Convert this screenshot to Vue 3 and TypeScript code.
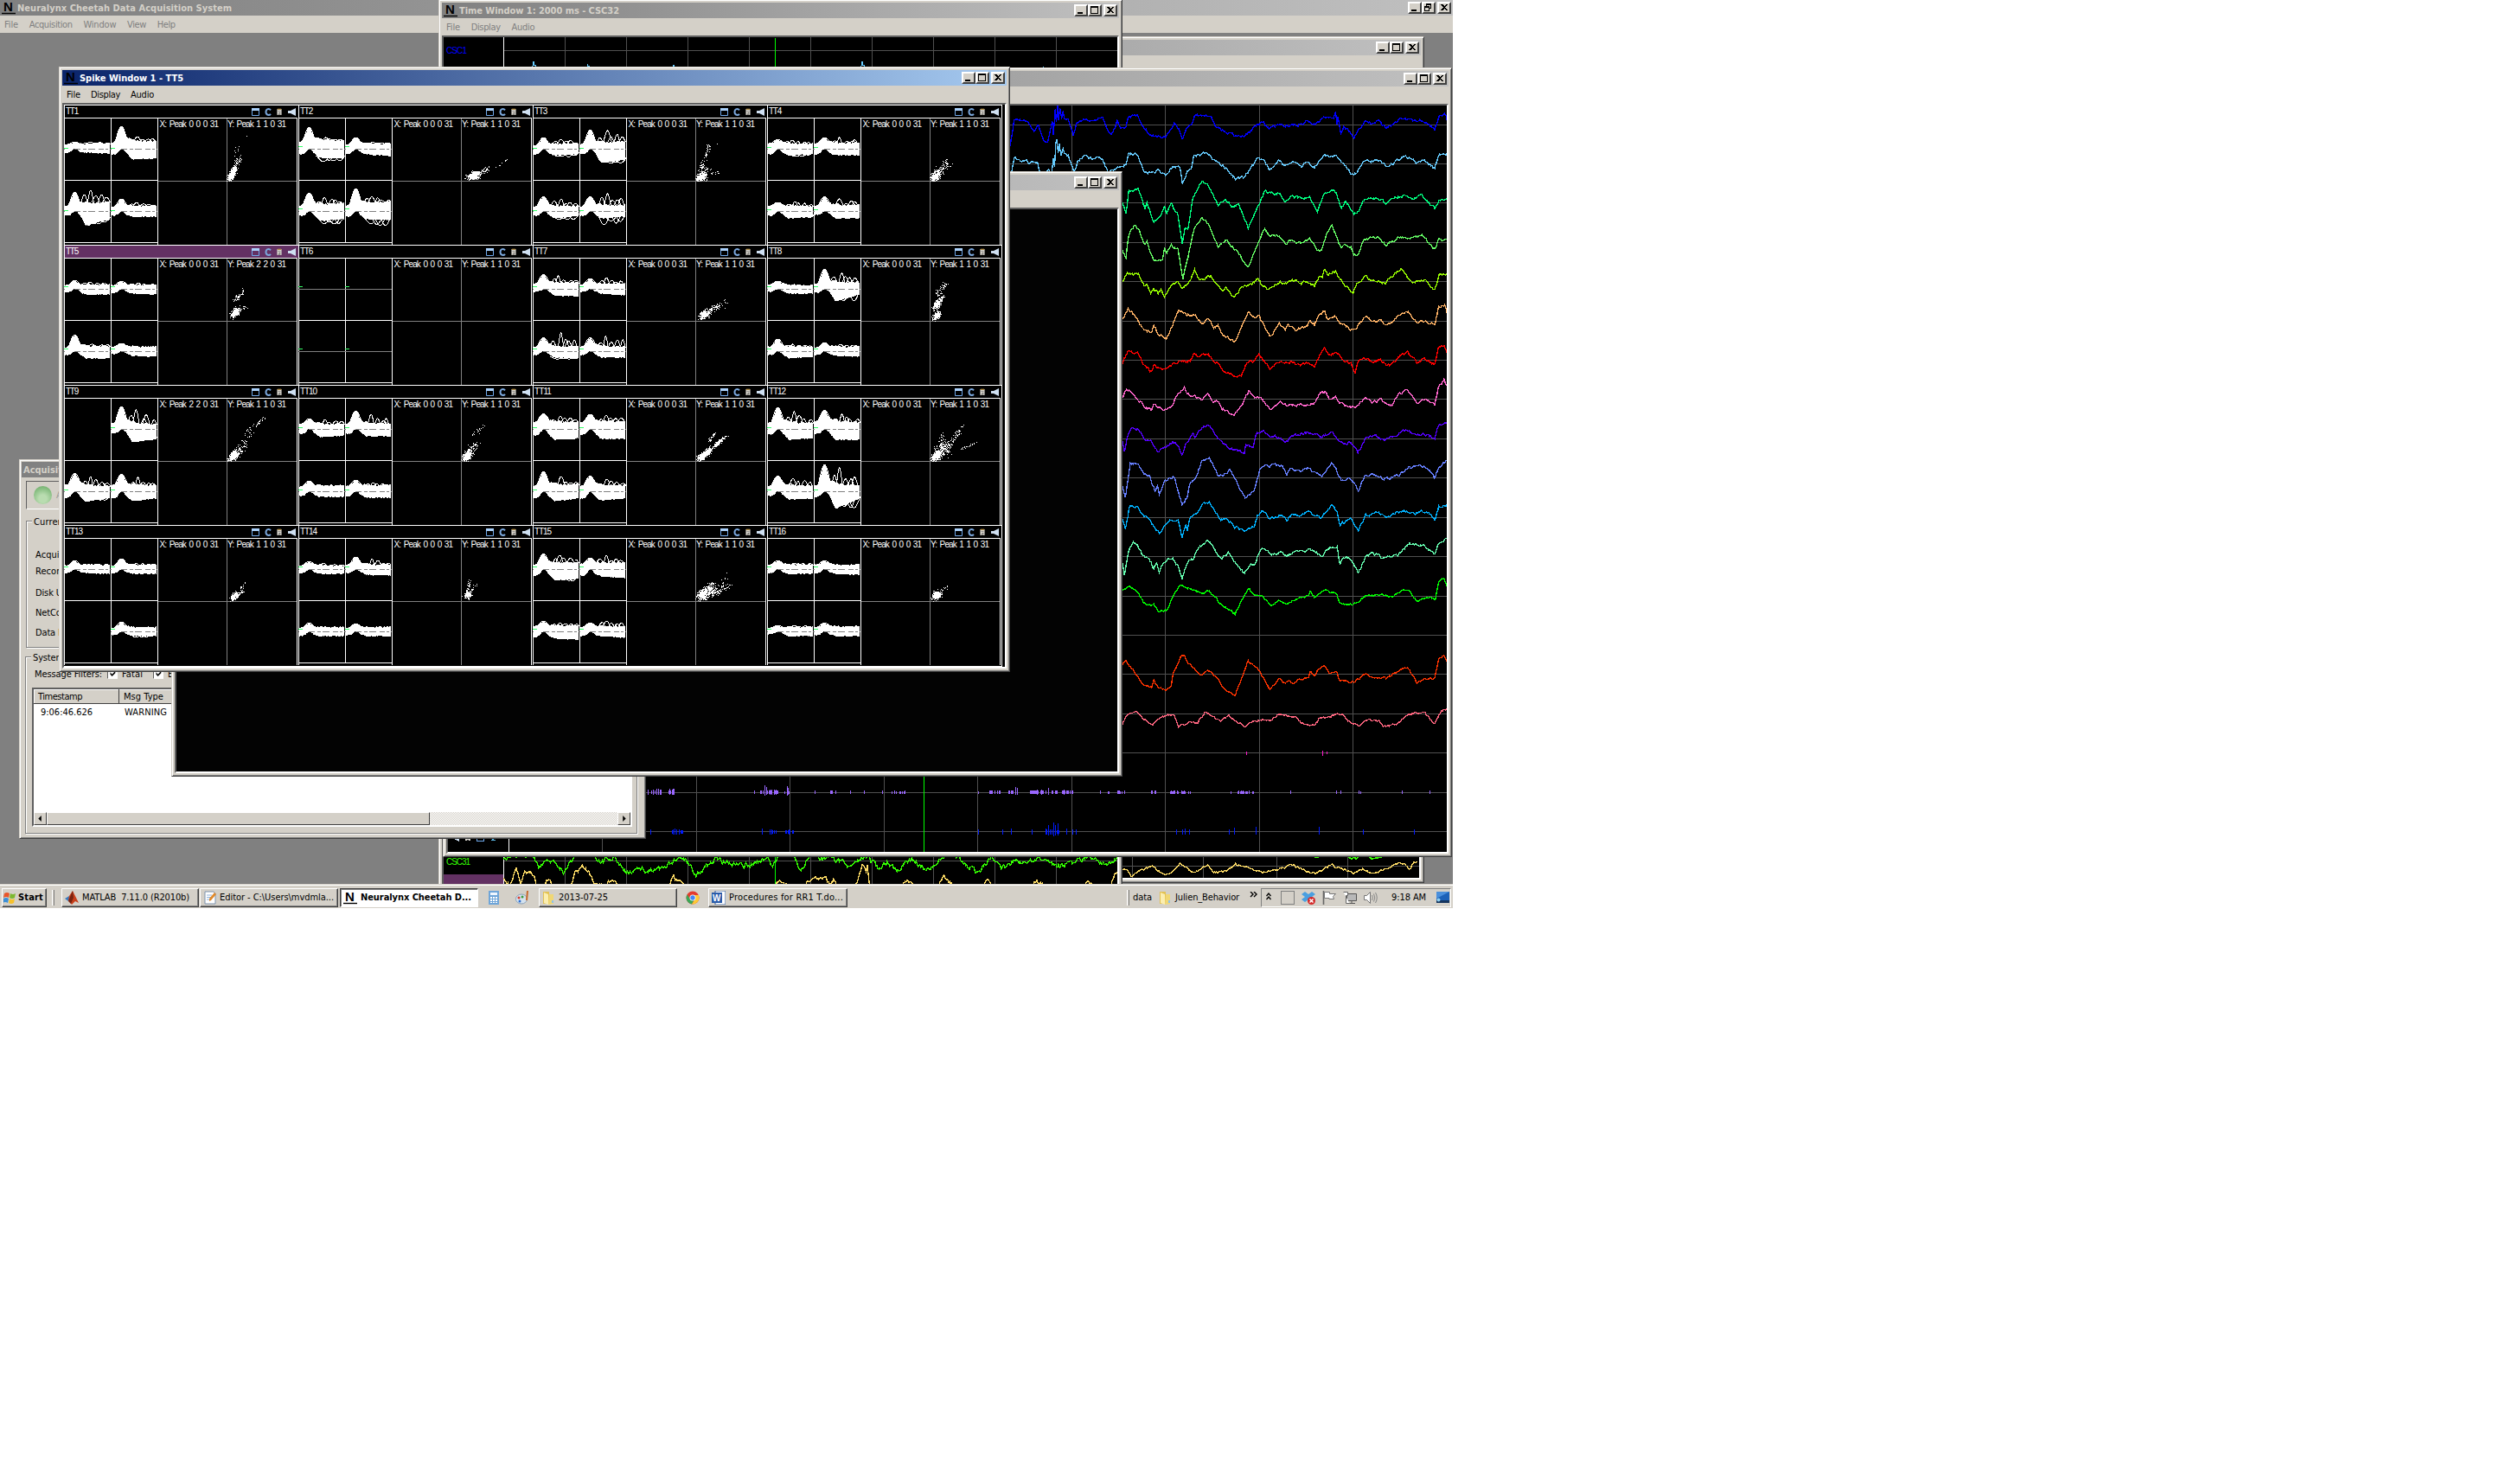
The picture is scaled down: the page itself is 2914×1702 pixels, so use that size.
<script setup lang="ts">
type Pt = [number, number]

const vFit = {
  mounted(el: HTMLElement, b: { value: number }) {
    const n = (el.textContent || '').trim().length
    el.style.letterSpacing = (b.value - el.getBoundingClientRect().width) / n + 'px'
  },
}

function rng(seed: number) {
  let s = seed * 7919 + 13
  return () => {
    s = (s * 1103515245 + 12345) % 2147483648
    return s / 2147483648
  }
}

// ---------- spike window ----------
// top left, peak, top right, bottom left, dip, bottom right, extra up, extra down
type Wave = number[] | null
interface Cell { name: string; x: string; y: string; g: number; w: Wave[]; c: number[][] }
const X0 = 'X: Peak 0 0 0 31'
const Y1 = 'Y: Peak 1 1 0 31'
const cells: Cell[] = [
  { name: 'TT1', x: X0, y: Y1, g: 50, w: [[5, 7, 6, 4, 4, 5, 8, 5], [7, 25, 9, 6, 12, 10, 14, 12], [5, 21, 11, 5, 16, 9, 24, 17], [5, 13, 6, 5, 6, 6, 10, 6]], c: [[2, 0, 10, 16, 2.5, 260], [8, 14, 15, 27, 3, 60], [8, 28, 13, 40, 2, 8], [23, 52, 23, 52, 0, 1]] },
  { name: 'TT2', x: X0, y: Y1, g: 48, w: [[8, 24, 10, 6, 10, 10, 13, 16], [5, 12, 6, 5, 6, 8, 8, 8], [6, 20, 9, 5, 11, 9, 16, 15], [6, 25, 11, 6, 9, 10, 17, 18]], c: [[7, 4, 22, 9, 3, 260], [20, 8, 34, 15, 2.5, 40], [36, 14, 54, 25, 1, 8]] },
  { name: 'TT3', x: X0, y: Y1, g: 50, w: [[4, 12, 6, 6, 7, 6, 11, 11], [5, 21, 9, 6, 16, 12, 21, 18], [5, 16, 6, 5, 8, 5, 14, 10], [5, 16, 7, 5, 8, 6, 20, 19]], c: [[2, 1, 12, 8, 3, 220], [4, 8, 14, 14, 3, 40], [6, 14, 12, 30, 2, 30], [11, 28, 16, 42, 2, 30], [18, 8, 28, 11, 2, 12], [25, 43, 25, 43, 0, 1]] },
  { name: 'TT4', x: X0, y: Y1, g: 49, w: [[6, 10, 6, 6, 7, 6, 10, 9], [6, 12, 7, 6, 7, 7, 13, 7], [6, 9, 6, 5, 8, 6, 11, 8], [6, 16, 7, 4, 8, 8, 14, 9]], c: [[3, 2, 10, 10, 3, 220], [8, 8, 20, 20, 4, 70], [18, 20, 20, 27, 1, 8], [26, 20, 26, 20, 0, 1]] },
  { name: 'TT5', x: X0, y: 'Y: Peak 2 2 0 31', g: 48, w: [[4, 9, 5, 4, 6, 6, 8, 7], [4, 8, 4, 4, 5, 6, 7, 6], [4, 18, 6, 4, 8, 8, 8, 9], [5, 8, 5, 3, 5, 6, 6, 6]], c: [[6, 6, 14, 14, 3, 150], [14, 12, 22, 17, 2, 14], [9, 25, 16, 30, 3, 30], [14, 30, 20, 36, 2, 10]] },
  { name: 'TT6', x: X0, y: Y1, g: 48, w: [[], [], [], []], c: [] },
  { name: 'TT7', x: X0, y: Y1, g: 48, w: [[6, 16, 7, 3, 7, 8, 15, 8], [5, 11, 6, 3, 5, 7, 13, 7], [5, 15, 6, 4, 7, 8, 21, 10], [5, 15, 5, 4, 7, 7, 17, 7]], c: [[6, 4, 14, 11, 3, 180], [12, 9, 26, 18, 3, 70], [26, 14, 36, 25, 3, 14]] },
  { name: 'TT8', x: X0, y: Y1, g: 48, w: [[5, 8, 4, 3, 5, 5, 5, 5], [5, 22, 8, 4, 14, 6, 18, 14], [5, 13, 5, 4, 8, 6, 8, 6], [4, 9, 5, 4, 5, 6, 8, 6]], c: [[5, 3, 11, 10, 2.500, 150], [5, 14, 11, 24, 2.500, 150], [10, 22, 15, 28, 2, 40], [8, 30, 18, 44, 3, 50]] },
  { name: 'TT9', x: 'X: Peak 2 2 0 31', y: Y1, g: 49, w: [null, [6, 25, 6, 5, 15, 11, 22, 13], [7, 20, 6, 7, 12, 7, 17, 11], [7, 19, 7, 8, 11, 8, 16, 9]], c: [[3, 1, 14, 12, 3, 200], [10, 10, 22, 22, 4, 50], [18, 22, 30, 36, 3, 16], [32, 40, 44, 50, 2, 22], [22, 34, 28, 38, 2, 8]] },
  { name: 'TT10', x: X0, y: Y1, g: 49, w: [[6, 11, 6, 5, 9, 7, 11, 7], [6, 20, 6, 5, 8, 8, 17, 9], [5, 11, 7, 5, 6, 6, 8, 6], [6, 12, 7, 5, 7, 7, 10, 8]], c: [[4, 1, 10, 12, 3, 200], [8, 10, 18, 20, 4, 50], [14, 32, 25, 40, 3, 18]] },
  { name: 'TT11', x: X0, y: Y1, g: 49, w: [[8, 17, 8, 7, 12, 10, 15, 12], [8, 16, 9, 6, 11, 11, 16, 11], [6, 22, 8, 7, 11, 8, 17, 9], [6, 17, 7, 8, 10, 8, 14, 9]], c: [[2, 1, 18, 14, 2.5, 220], [8, 8, 18, 16, 3, 50], [18, 14, 34, 28, 1.5, 110], [16, 24, 22, 32, 1.5, 35], [34, 28, 40, 32, 1, 4]] },
  { name: 'TT12', x: X0, y: Y1, g: 49, w: [[7, 24, 7, 6, 12, 10, 20, 11], [9, 21, 8, 5, 12, 12, 17, 12], [6, 17, 6, 5, 9, 8, 15, 9], [6, 30, 7, 6, 20, 8, 27, 20]], c: [[3, 1, 12, 10, 3, 200], [8, 8, 22, 20, 5, 120], [20, 14, 34, 36, 2, 50], [34, 36, 40, 43, 1, 6], [10, 24, 16, 32, 3, 15], [36, 14, 54, 22, 1, 22]] },
  { name: 'TT13', x: X0, y: Y1, g: 48, w: [[4, 9, 5, 4, 4, 5, 5, 5], [4, 11, 5, 4, 5, 5, 7, 5], null, [4, 10, 5, 4, 5, 5, 6, 7]], c: [[6, 3, 12, 9, 2.5, 120], [12, 8, 20, 14, 2.5, 25], [16, 14, 21, 22, 1.5, 8]] },
  { name: 'TT14', x: X0, y: Y1, g: 48, w: [[4, 8, 4, 4, 5, 5, 7, 5], [5, 13, 5, 4, 6, 7, 12, 8], [4, 9, 5, 5, 5, 5, 6, 5], [4, 8, 5, 4, 5, 5, 6, 5]], c: [[5, 4, 11, 11, 2.5, 110], [7, 10, 10, 26, 2, 30], [12, 14, 18, 20, 2, 8]] },
  { name: 'TT15', x: X0, y: Y1, g: 48, w: [[5, 17, 8, 7, 12, 11, 16, 14], [6, 12, 8, 7, 8, 10, 16, 10], [6, 11, 7, 6, 8, 9, 10, 9], [5, 9, 6, 5, 5, 7, 12, 7]], c: [[4, 4, 12, 11, 4, 180], [8, 8, 24, 16, 5, 130], [24, 12, 38, 20, 4, 50], [16, 20, 36, 26, 3, 15], [36, 33, 36, 33, 0, 1]] },
  { name: 'TT16', x: X0, y: Y1, g: 48, w: [[5, 9, 5, 4, 5, 5, 7, 5], [5, 9, 5, 4, 5, 6, 6, 6], [4, 6, 5, 3, 5, 5, 7, 5], [5, 9, 6, 4, 5, 5, 7, 5]], c: [[4, 4, 12, 10, 3, 180], [12, 11, 20, 18, 1.5, 12]] },
]

function body(w: Wave, seed: number): string {
  if (!w || !w.length) return ''
  const r = rng(seed)
  const [t, p, tl, l, d, e] = w
  const up: string[] = []
  const lo: string[] = []
  for (let x = 1; x <= 53; x++) {
    const f = x / 53
    const base = t + (tl - t) * f
    const sd = x < 12 ? 5 : 4
    const slow = (p - base) * 0.2 * Math.exp(-Math.pow((x - 20) / 9, 2))
    let a = base + (p - base) * Math.exp(-Math.pow((x - 12.5) / sd, 2)) * 0.94 + slow
    a += (r() - 0.4) * (x > 18 ? 2.6 : 1)
    let b: number
    if (x < 18) b = l - (l + 0.5) * Math.exp(-Math.pow((x - 13) / 4.5, 2))
    else if (x < 25) b = l * 0.7 + (d - l * 0.7) * ((x - 18) / 7)
    else b = d + (e - d) * ((x - 25) / 28)
    b += 0.6 + (r() - 0.5) * 1.4
    up.push(`${x} ${(-a).toFixed(1)}`)
    lo.unshift(`${x} ${b.toFixed(1)}`)
  }
  return 'M' + up.join('L') + 'L' + lo.join('L') + 'Z'
}

function humps(w: Wave, seed: number): string {
  if (!w || !w.length) return ''
  const r = rng(seed + 50)
  let s = ''
  const hump = (c: number, wd: number, from: number, to: number, sg: number) => {
    for (let i = -8; i <= 8; i++) {
      const x = Math.min(53, c + (i / 8) * wd)
      const y = from + (to - from) * Math.pow(Math.cos((i / 8) * Math.PI / 2), 1.3)
      s += (i === -8 ? 'M' : 'L') + x.toFixed(1) + ' ' + (sg * y).toFixed(1)
    }
  }
  const dx = w[6] - w[2]
  if (dx > 1) for (let k = 0; k < 5; k++) hump(23 + k * 6 + r() * 4, 3 + r() * 2, w[2] - 1, w[2] + dx * (k === 1 ? 1 : 0.2 + r() * 0.5), -1)
  const db = w[7] - w[5]
  if (db > 1) for (let k = 0; k < 4; k++) hump(28 + k * 6 + r() * 3, 5 + r() * 4, w[5] - 2, w[5] + db * (0.4 + r() * 0.6), 1)
  hump(12.5, 8, w[0], w[1] + 0.8, -1)
  return s
}

function dots(c: number[][], seed: number): string {
  const r = rng(seed + 900)
  let s = ''
  for (const [x0, y0, x1, y1, w, n] of c) {
    const dense = n > 100
    for (let i = 0; i < n * (dense ? 1.5 : 1); i++) {
      const f = dense ? (r() + r()) / 2 : r()
      const g = () => (r() + r() + r() - 1.5) * w * (dense ? 1.35 : 1.2)
      const x = Math.round(x0 + (x1 - x0) * f + g())
      const y = Math.round(y0 + (y1 - y0) * f + g())
      if (y < 0 || x < 0) continue
      s += `M${188 + x} ${73 - y}h1v1h-1z`
    }
  }
  return s
}

const plots = cells.map((c, i) => ({
  ...c,
  panels: c.w.map((w, k) => ({
    on: w !== null,
    flat: !!w && !w.length,
    dx: (k % 2) * 54,
    dy: k < 2 ? 36 : 108,
    d: body(w, i * 4 + k + 1),
    h: humps(w, i * 4 + k + 1),
  })),
  dots: dots(c.c, i + 1),
}))

// ---------- continuous traces ----------
interface Trace { color: string; pts: string }
function parse(s: string): Pt[] {
  return s.split(' ').map(q => q.split(',').map(Number) as Pt)
}
function wire(s: string, seed: number, ox: number, sx: number, oy: number, sy: number, jit: number): string {
  const r = rng(seed + 300)
  const p = parse(s).map(([x, y]) => [ox + x / sx, oy + y / sy] as Pt)
  let out = ''
  let n = 0
  for (let i = 0; i < p.length - 1; i++) {
    const [ax, ay] = p[i]
    const [bx, by] = p[i + 1]
    const m = Math.max(1, Math.round(bx - ax))
    for (let k = 0; k < m; k++) {
      n = n * 0.55 + (r() - 0.5) * jit
      const f = k / m
      const y = ay + (by - ay) * f + n
      out += `${(ax + (bx - ax) * f).toFixed(1)},${y.toFixed(1)} `
    }
  }
  const z = p[p.length - 1]
  return out + `${z[0].toFixed(1)},${z[1].toFixed(1)}`
}

const upper: Trace[] = [
  { color: '#0000ff', pts: '0,440 24,498 38,405 60,412 85,418 105,450 120,425 140,480 152,485 168,415 172,465 178,375 182,420 186,362 190,410 194,370 200,405 205,385 210,412 222,400 240,465 250,425 275,410 340,405 355,445 370,465 390,415 400,440 420,430 430,395 460,398 480,435 510,465 555,468 585,425 600,440 613,480 625,440 645,425 655,395 712,395 725,430 750,445 790,465 825,465 850,445 885,415 912,443 945,422 965,430 1000,428 1048,415 1068,430 1088,405 1130,400 1137,380 1142,420 1145,395 1155,455 1165,435 1185,450 1200,470 1240,412 1260,425 1285,415 1308,437 1370,402 1410,418 1425,412 1450,420 1476,443 1492,398 1510,392 1518,410' },
  { color: '#66ccff', pts: '24,600 30,587 38,535 60,550 95,555 118,560 130,600 155,580 165,600 172,545 176,570 180,490 184,475 188,520 192,490 198,535 205,505 210,525 222,530 243,590 255,550 275,535 340,545 360,590 380,582 400,572 420,565 428,525 460,528 480,585 510,595 530,580 555,600 580,570 605,575 613,625 630,590 645,570 652,530 700,525 720,548 755,570 795,612 825,605 870,545 890,545 912,577 945,548 965,570 1000,552 1020,568 1040,552 1065,572 1100,530 1140,535 1165,565 1200,603 1235,550 1290,548 1310,570 1365,538 1395,540 1412,557 1440,545 1476,577 1490,530 1518,525' },
  { color: '#00ff80', pts: '400,680 408,690 420,735 430,655 462,645 485,715 492,690 515,760 540,735 552,705 560,730 575,695 598,735 613,830 622,775 632,780 650,670 680,620 702,635 735,700 760,680 790,710 805,700 838,780 880,685 895,650 915,663 945,658 963,690 985,670 1020,678 1048,670 1075,718 1100,665 1123,645 1142,665 1157,715 1170,690 1200,735 1215,725 1230,685 1280,675 1308,695 1360,670 1410,678 1430,665 1476,715 1490,685 1518,678' },
  { color: '#66ff66', pts: '400,840 408,860 420,882 430,800 450,773 465,785 485,835 492,828 515,893 545,885 552,848 560,870 575,838 598,855 615,955 632,880 655,775 680,748 702,765 735,845 762,822 805,865 838,917 880,815 895,783 915,810 945,803 965,835 985,820 1020,832 1048,815 1075,858 1088,855 1110,790 1125,770 1157,850 1170,835 1190,845 1200,870 1215,868 1235,818 1280,813 1308,838 1350,812 1410,812 1430,800 1476,855 1490,820 1518,818' },
  { color: '#99ff00', pts: '400,965 408,962 425,935 462,940 485,980 492,970 505,1005 515,990 530,1005 540,990 552,1015 580,970 598,965 613,987 640,965 655,925 672,955 710,945 735,980 750,995 762,985 790,1017 815,985 850,972 872,955 885,975 912,990 945,962 965,970 1000,957 1020,968 1040,960 1065,975 1080,950 1092,945 1100,920 1110,940 1137,928 1150,955 1197,1002 1210,965 1220,970 1240,943 1255,960 1285,962 1308,970 1335,940 1360,922 1400,965 1440,958 1476,990 1492,940 1518,935' },
  { color: '#ffb366', pts: '400,1100 408,1090 427,1055 450,1080 480,1125 508,1135 515,1108 530,1140 558,1157 580,1110 600,1062 640,1080 655,1075 680,1108 700,1090 720,1120 735,1115 750,1143 792,1168 815,1115 838,1068 860,1088 875,1085 912,1150 945,1112 965,1130 975,1110 1000,1130 1040,1112 1050,1098 1065,1110 1080,1080 1100,1060 1110,1090 1137,1083 1150,1105 1200,1130 1240,1080 1265,1105 1290,1090 1308,1108 1335,1100 1365,1068 1385,1070 1415,1105 1440,1100 1476,1107 1490,1050 1510,1045 1518,1070' },
  { color: '#ff0000', pts: '400,1240 408,1240 427,1200 462,1210 485,1255 508,1272 515,1250 555,1268 580,1245 620,1235 640,1235 652,1210 672,1220 702,1212 720,1240 735,1240 750,1262 795,1292 815,1282 835,1235 860,1235 875,1212 912,1260 945,1235 965,1245 985,1238 1020,1250 1040,1240 1065,1255 1080,1220 1100,1185 1115,1215 1140,1207 1165,1232 1190,1245 1204,1272 1215,1235 1240,1225 1265,1240 1290,1228 1310,1250 1330,1248 1365,1207 1385,1207 1415,1240 1440,1227 1476,1247 1488,1190 1508,1180 1518,1205' },
  { color: '#ff66cc', pts: '400,1365 408,1360 422,1328 445,1350 485,1388 508,1405 515,1385 552,1403 575,1390 590,1360 620,1322 630,1348 680,1365 700,1350 720,1375 735,1370 750,1397 790,1425 815,1385 840,1338 860,1360 878,1355 912,1402 945,1375 965,1385 1000,1388 1065,1380 1080,1350 1100,1340 1115,1365 1137,1355 1150,1380 1204,1395 1240,1360 1265,1378 1290,1367 1330,1385 1350,1350 1385,1333 1415,1380 1445,1367 1476,1385 1488,1330 1508,1298 1518,1320' },
  { color: '#5500ff', pts: '400,1500 408,1510 415,1540 430,1475 440,1460 462,1468 485,1508 505,1505 530,1548 555,1530 580,1510 600,1525 611,1555 625,1520 640,1495 650,1485 655,1495 680,1460 705,1455 735,1500 750,1515 790,1540 825,1548 830,1520 855,1525 865,1485 890,1472 912,1498 930,1493 965,1508 1000,1488 1050,1478 1090,1498 1125,1475 1150,1515 1190,1515 1213,1548 1240,1500 1265,1488 1308,1503 1350,1483 1380,1470 1410,1488 1440,1483 1476,1500 1490,1455 1518,1445' },
]
const lower: Trace[] = [
  { color: '#6680ff', pts: '400,120 408,130 418,160 435,50 462,45 480,80 500,85 520,140 528,120 534,150 552,105 585,92 612,188 630,155 640,110 660,95 680,35 705,30 740,92 775,68 800,110 828,160 858,140 880,60 905,55 955,52 970,80 985,62 1020,70 1050,55 1060,75 1090,90 1123,38 1157,105 1185,92 1215,135 1240,85 1265,80 1308,98 1350,85 1385,60 1440,55 1476,92 1490,60 1518,35' },
  { color: '#00b2ff', pts: '400,225 408,235 418,268 432,190 460,187 480,222 500,232 520,265 534,280 552,258 570,235 598,240 612,292 625,255 630,270 640,225 660,215 685,175 705,178 745,235 765,228 795,260 825,272 858,255 870,220 890,205 912,230 955,218 972,240 980,220 1020,218 1050,205 1085,230 1105,210 1123,190 1142,205 1152,250 1190,235 1215,272 1240,220 1285,213 1308,228 1360,205 1410,212 1430,203 1455,213 1476,235 1490,190 1518,185' },
  { color: '#66ffb2', pts: '400,370 408,380 415,420 430,335 445,312 462,325 480,360 500,362 515,400 525,380 534,412 550,375 580,362 600,395 612,432 630,380 650,365 670,330 700,303 745,365 770,345 800,390 826,415 840,388 860,385 880,335 890,330 915,352 955,345 970,358 1000,340 1048,335 1090,358 1120,325 1142,328 1152,385 1165,360 1190,365 1215,415 1240,360 1265,345 1300,362 1350,352 1390,315 1440,320 1476,350 1490,315 1518,298' },
  { color: '#00ff00', pts: '400,475 408,470 430,455 460,478 480,515 508,525 515,515 530,542 560,540 580,495 605,455 640,465 680,485 705,475 740,515 793,552 815,510 840,465 860,490 885,488 915,525 940,507 965,518 1000,500 1045,490 1050,472 1065,495 1100,470 1142,485 1150,515 1200,520 1240,490 1290,487 1330,497 1370,468 1385,470 1415,508 1440,498 1478,500 1490,445 1508,433 1518,458' },
  { color: '#ff3300', pts: '400,730 408,722 420,705 445,740 480,790 508,797 515,775 530,800 558,805 575,790 582,750 610,690 620,688 630,715 680,760 700,740 735,770 750,797 793,825 815,770 838,710 875,740 912,805 945,770 965,785 975,775 990,787 1010,770 1045,765 1050,745 1065,760 1080,735 1100,725 1115,750 1142,748 1150,775 1200,780 1240,750 1265,765 1310,768 1350,745 1365,733 1385,735 1415,783 1440,770 1476,768 1490,700 1508,688 1518,712' },
  { color: '#ff6680', pts: '400,915 408,920 427,885 460,880 480,905 512,923 530,905 555,892 585,892 600,930 640,915 665,918 690,882 745,912 770,892 800,915 828,928 860,910 920,905 950,887 1000,900 1020,918 1065,927 1080,905 1142,887 1165,890 1180,912 1220,927 1250,905 1285,910 1300,930 1350,922 1385,888 1440,880 1476,920 1500,875 1518,870' },
]
const traces = [
  ...upper.map((t, i) => ({ color: t.color, d: wire(t.pts, i, 1160, 2.958, 0, 2.958, 2.8) })),
  ...lower.map((t, i) => ({ color: t.color, d: wire(t.pts, i + 20, 1160, 2.958, 520, 2.904, i > 2 ? 2 : 2.8) })),
]
const rows = [144, 189, 234, 280, 325, 371, 416, 461, 507, 552, 598, 643, 689, 734, 779, 825, 870, 916, 961]
const cols = [696, 805, 913, 1022, 1130, 1239, 1347, 1456, 1564]
const cols1 = [653, 724, 795, 866, 937, 1008, 1079, 1150, 1221]

// from, to, count, height
function ticks(list: number[][], y: number, seed: number, down: number): string {
  const r = rng(seed)
  let s = ''
  for (const [a, b, n, h] of list)
    for (let i = 0; i < n; i++) {
      const x = Math.round(a + (b - a) * (n > 1 ? r() : 0))
      const q = Math.round(h * (0.3 + 0.7 * (n > 1 ? r() * r() : 1)))
      s += `M${x + 0.5} ${y - q}V${y + down + Math.round(q / 4)}`
    }
  return s
}
const purple = ticks([[744, 780, 20, 4], [872, 872, 1, 1], [878, 899, 24, 3], [884, 884, 1, 7], [886, 886, 1, 5], [910, 910, 1, 6], [911, 911, 1, 4], [907, 912, 4, 1], [942, 942, 1, 1], [956, 969, 5, 2], [983, 983, 1, 1], [999, 999, 1, 1], [1020, 1020, 1, 1], [1028, 1046, 9, 1], [1128, 1132, 2, 1], [1142, 1172, 20, 2], [1174, 1174, 1, 5], [1176, 1176, 1, 4], [1190, 1241, 48, 2], [1212, 1212, 1, 4], [1272, 1272, 1, 1], [1281, 1286, 2, 1], [1291, 1303, 9, 1], [1327, 1338, 6, 2], [1353, 1378, 20, 1], [1421, 1424, 3, 1], [1429, 1451, 18, 1], [1492, 1492, 1, 1], [1545, 1545, 1, 1], [1550, 1550, 1, 1], [1570, 1574, 2, 1], [1621, 1621, 1, 1], [1653, 1653, 1, 1]], 915, 4, 3)
const blue = ticks([[752, 752, 1, 2], [773, 790, 9, 4], [881, 881, 1, 3], [889, 898, 6, 2], [907, 917, 7, 2], [1131, 1131, 1, 2], [1159, 1159, 1, 2], [1169, 1169, 1, 3], [1191, 1195, 2, 3], [1207, 1225, 10, 4], [1212, 1212, 1, 7], [1218, 1218, 1, 10], [1220, 1220, 1, 7], [1223, 1223, 1, 9], [1233, 1233, 1, 3], [1240, 1240, 1, 2], [1244, 1244, 1, 2], [1360, 1360, 1, 2], [1367, 1367, 1, 2], [1370, 1370, 1, 3], [1375, 1375, 1, 2], [1421, 1421, 1, 2], [1427, 1427, 1, 4], [1452, 1452, 1, 5], [1525, 1525, 1, 5], [1576, 1576, 1, 2], [1635, 1635, 1, 2]], 961, 9, 3)

const green31 = wire('318,697 330,685 345,695 355,680 375,690 390,725 410,697 440,745 460,690 480,660 515,712 540,690 565,750 590,730 605,745 630,735 680,690 707,755 745,697 790,725 830,710 850,690 856,725 866,715 872,670 885,660 900,690 915,738 940,680 960,700 975,690 1015,730 1045,690 1075,735 1090,710 1110,740 1140,700 1165,738 1185,720 1215,680 1245,710 1272,750 1300,690 1320,735 1345,705 1370,720 1395,695 1430,725 1465,715 1490,690 1515,710 1540,715 1555,690', 71, 400, 1.742, 760, 3, 5)
const gold1 = wire('318,770 330,790 343,735 352,775 362,745 378,750 385,790 400,790 405,770 415,785 440,800 455,790 462,745 478,728 490,745 500,790 520,790 537,765 550,800 650,800 660,762 690,800 860,800 872,778 900,800 920,800 930,770 965,765 975,790 982,770 990,800 1025,800 1040,720 1048,745 1050,720 1055,800 1120,800 1132,768 1145,800 1190,800 1205,758 1225,800 1280,800 1292,775 1305,800 1380,800 1390,770 1410,800 1485,800 1495,772 1510,800 1540,800 1550,745 1555,740', 72, 400, 1.742, 760, 3, 4)
const gold2 = wire('390,1400 408,1412 425,1410 438,1435 460,1415 510,1398 550,1430 575,1420 605,1390 650,1418 700,1398 720,1422 765,1412 795,1392 850,1405 890,1420 930,1412 990,1392 1040,1418 1075,1420 1125,1395 1195,1420 1230,1408 1265,1423 1310,1408 1340,1392 1370,1388 1390,1412 1405,1385 1418,1384', 73, 1160, 2.958, 520, 2.904, 2)

const spikeMenu: [string, number][] = [['File', 16], ['Display', 34], ['Audio', 27]]
const mainMenu: [string, number][] = [['File', 16], ['Acquisition', 50], ['Window', 38], ['View', 22], ['Help', 21]]
const status: [string, number, string][] = [['Acquisition', 55, 'a'], ['Recording', 50, 'b'], ['Disk Usage', 54, 'c'], ['NetCom', 39, 'd'], ['Data Dir', 40, 'e']]
</script>

<template>
  <div class="screen">
    <svg width="0" height="0" class="defs">
      <defs>
        <symbol id="n" viewBox="0 0 16 16">
          <text x="2" y="12" font-family="Liberation Sans" font-weight="bold" font-size="15">N</text>
          <path d="M0 14.5H16" stroke="#000" stroke-width="1.4" />
        </symbol>
        <symbol id="min" viewBox="0 0 12 10"><path d="M2 7h6v2H2z" /></symbol>
        <symbol id="max" viewBox="0 0 12 10"><path fill-rule="evenodd" d="M1 0h9v9H1zM2 2v6h7V2z" /></symbol>
        <symbol id="res" viewBox="0 0 12 10"><path fill-rule="evenodd" d="M3 0h6v6H7v3H1V3h2zM4 2v1h3v2h1V2zM2 5v3h4V5z" /></symbol>
        <symbol id="cls" viewBox="0 0 12 10"><path d="M2 1h2l2 2 2-2h2L7 4.500l3 3.500H8L6 6 4 8H2l3-3.500z" /></symbol>
        <symbol id="iw" viewBox="0 0 9 9"><path d="M.5 .5h8v8h-8z" fill="none" stroke="#6fa8ea" /><path d="M0 0h9v3H0z" fill="#a9d0fa" /></symbol>
        <symbol id="ic" viewBox="0 0 8 9"><path d="M7 2.300C5.500 .3 1.500 .5 1.500 4.500S5.500 8.600 7 6.800" fill="none" stroke="#7aa7dc" stroke-width="2" /></symbol>
        <symbol id="id" viewBox="0 0 7 9"><path d="M.5 .5h6v8h-6z" fill="#d9d6cf" /><path d="M1 0h5v1.500H1z" fill="#b08a3c" /><path d="M2 3h1v1H2zM4 3h1v1H4zM3 5h2v1H3zM2 7h3v1H2z" fill="#333" /></symbol>
        <symbol id="is" viewBox="0 0 9 9"><path d="M0 3h3L9 0v9L3 6H0z" fill="#cfe0f2" /></symbol>
        <symbol id="fold" viewBox="0 0 16 16"><path d="M2 1h7v14H2z" fill="#e3c254" /><path d="M3 2l5 2v12l-5-2z" fill="#fbeeb0" /><path d="M9 4h5v11l-6 1z" fill="#f0d774" /><path d="M12 11h2v3h-2z" fill="#8ec2ea" /></symbol>
      </defs>
    </svg>

    <section class="desk">
      <header class="title off main">
        <svg class="nl"><use href="#n" /></svg>
        <b v-fit="248">Neuralynx Cheetah Data Acquisition System</b>
        <i class="sp"></i>
        <svg class="btn"><use href="#min" /></svg><svg class="btn"><use href="#res" /></svg><svg class="btn last"><use href="#cls" /></svg>
      </header>
      <nav class="menu dim"><span v-for="m in mainMenu" :key="m[0]" v-fit="m[1]">{{ m[0] }}</span></nav>

      <!-- third time window, mostly covered -->
      <article class="win wc">
        <header class="title off"><i class="sp"></i><svg class="btn"><use href="#min" /></svg><svg class="btn"><use href="#max" /></svg><svg class="btn last"><use href="#cls" /></svg></header>
        <nav class="menu"></nav>
        <div class="client">
          <svg class="plot" viewBox="566 86 1075 929" preserveAspectRatio="none">
            <path class="grid" d="M1309.500 86V1015M1391.500 86V1015M1476.500 86V1015M1558.500 86V1015M566 1001.500H1641" />
            <polyline :points="gold2" stroke="#ffdd66" />
            <path d="M1520 991h5M1559 991l4 2 3-2 2 2 3-2M1583 990l3 3 6-1 6-1" stroke="#33ff00" stroke-width="1.500" />
          </svg>
        </div>
      </article>

      <article class="win w1">
        <header class="title off">
          <svg class="nl"><use href="#n" /></svg><b v-fit="185">Time Window 1: 2000 ms - CSC32</b><i class="sp"></i>
          <svg class="btn"><use href="#min" /></svg><svg class="btn"><use href="#max" /></svg><svg class="btn last"><use href="#cls" /></svg>
        </header>
        <nav class="menu dim"><span v-for="m in spikeMenu" :key="m[0]" v-fit="m[1]">{{ m[0] }}</span></nav>
        <div class="client">
          <svg class="plot" viewBox="513 43 779 1001" preserveAspectRatio="none">
            <path class="grid" :d="cols1.map(x => `M${x + .5} 43V1044`).join('') + 'M583 58.500H1292M583 995.500H1292'" />
            <path d="M582.500 43V1044" stroke="#fff" />
            <path d="M896.500 44V1044" stroke="#00ff00" />
            <path d="M615 80l1-4 1-5 1 5 1-1 2 5M679 80v-6l1 3 1-1 1 3M778 80l1-5 1 4M995 80l1-4 1-5 1 5 1-1 1 5M1206 80v-3" stroke="#66ccff" />
            <path d="M513 1011h69v33h-69z" class="sel" />
            <text x="516" y="62" fill="#0000ff" textLength="24">CSC1</text>
            <text x="516" y="1000" fill="#33ff00" textLength="28">CSC31</text>
            <polyline :points="green31" stroke="#33ff00" />
            <polyline :points="gold1" stroke="#ffdd66" />
          </svg>
        </div>
      </article>

      <article class="win w2">
        <header class="title off"><i class="sp"></i><svg class="btn"><use href="#min" /></svg><svg class="btn"><use href="#max" /></svg><svg class="btn last"><use href="#cls" /></svg></header>
        <nav class="menu"></nav>
        <div class="client">
          <svg class="plot" viewBox="518 122 1155 863" preserveAspectRatio="none">
            <path class="grid" :d="cols.map(x => `M${x + .5} 122V985`).join('') + rows.map(y => `M588 ${y + .5}H1673`).join('')" />
            <path d="M588.500 122V985" stroke="#fff" />
            <polyline v-for="(t, i) in traces" :key="i" :points="t.d" :stroke="t.color" />
            <path d="M1441.500 869v4M1529.500 868v6M1534.500 869v3" stroke="#ff19cc" />
            <path :d="purple" stroke="#9966ff" />
            <path :d="blue" stroke="#0019ff" />
            <path d="M1068.500 122V985" stroke="#00ff00" />
            <use href="#is" x="522" y="964" width="9" height="9" /><use href="#id" x="538" y="964" width="6" height="9" />
            <use href="#iw" x="551" y="964" width="9" height="9" />
            <path d="M568 965h4v2h-1v4h2v1h-5v-1h1v-4h-1z" fill="#5ab4e0" />
          </svg>
        </div>
      </article>

      <article class="win dlg">
        <header class="title off"><b v-fit="62">Acquisition</b></header>
        <div class="dbody">
          <div class="tool"><i class="ball"></i><span>ACQ</span></div>
          <div class="group g1">
            <span class="leg" v-fit="42">Current</span>
            <span v-for="s in status" :key="s[0]" class="st" :class="s[2]"><em v-fit="s[1]">{{ s[0] }}</em></span>
          </div>
          <div class="group g2">
            <span class="leg" v-fit="40">System</span>
            <div class="filters">
              <span v-fit="78">Message Filters:</span>
              <svg class="chk c1" viewBox="0 0 12 12"><path d="M3 4l2.500 3L10 2v3L5.500 9.500 3 7z" /></svg><span v-fit="24">Fatal</span>
              <svg class="chk c2" viewBox="0 0 12 12"><path d="M3 4l2.500 3L10 2v3L5.500 9.500 3 7z" /></svg><span>Error</span>
            </div>
            <div class="list">
              <div class="lh"><span class="h1"><em v-fit="51">Timestamp</em></span><span class="h2"><em v-fit="46">Msg Type</em></span></div>
              <div class="lr"><span class="h1"><em v-fit="60">9:06:46.626</em></span><span class="h2"><em v-fit="49">WARNING</em></span></div>
              <div class="lfill"></div>
              <div class="bar">
                <svg class="sb" viewBox="0 0 15 15"><path d="M9 3.500v8L5 7.500z" /></svg><i class="thumb"></i><i class="track"></i><svg class="sb" viewBox="0 0 15 15"><path d="M6 3.500v8l4-4z" /></svg>
              </div>
            </div>
          </div>
        </div>
      </article>

      <article class="win vid">
        <header class="title off"><i class="sp"></i><svg class="btn"><use href="#min" /></svg><svg class="btn"><use href="#max" /></svg><svg class="btn last"><use href="#cls" /></svg></header>
        <nav class="menu"></nav>
        <div class="client dark"></div>
      </article>

      <article class="win spike">
        <header class="title on">
          <svg class="nl"><use href="#n" /></svg><b v-fit="120">Spike Window 1 - TT5</b><i class="sp"></i>
          <svg class="btn"><use href="#min" /></svg><svg class="btn"><use href="#max" /></svg><svg class="btn last"><use href="#cls" /></svg>
        </header>
        <nav class="menu"><span v-for="m in spikeMenu" :key="m[0]" v-fit="m[1]">{{ m[0] }}</span></nav>
        <div class="client">
          <div class="cells">
            <div v-for="p in plots" :key="p.name" class="cell">
              <div class="ch" :class="{ sel: p.name === 'TT5' }">
                <span v-fit="p.name.length > 3 ? 19 : 14">{{ p.name }}</span><i class="sp"></i>
                <svg class="k1"><use href="#iw" /></svg><svg class="k2"><use href="#ic" /></svg><svg class="k3"><use href="#id" /></svg><svg class="k4"><use href="#is" /></svg>
              </div>
              <svg class="cb" viewBox="0 0 271 147">
                <path d="M108 73.500H269M188.500 1V147" stroke="#808080" />
                <path d="M0 .5H269.500M0 72.500H108M0 144.500H108M.5 0V147M54.500 0V144M108.500 0V147M269.500 0V147" stroke="#fff" />
                <g v-for="(w, k) in p.panels" :key="k" :transform="`translate(${w.dx} ${w.dy})`">
                  <path v-if="w.d" :d="w.d" fill="#fff" />
                  <path v-if="w.h" :d="w.h" stroke="#fff" />
                  <path v-if="w.on" d="M0 .5H54" stroke="#808080" :stroke-dasharray="w.flat ? undefined : '1 11 7 3 4 2 8 4 6 2 3 2'" />
                  <path v-if="w.on" :d="`M0 ${p.g - 50.5}h5`" stroke="#33ff66" />
                </g>
                <path :d="p.dots" fill="#fff" />
                <text x="110.500" y="10.500" fill="#fff" textLength="68.500" word-spacing="1.500">{{ p.x }}</text>
                <text x="189" y="10.500" fill="#fff" textLength="68" word-spacing="1.500">{{ p.y }}</text>
              </svg>
            </div>
          </div>
        </div>
      </article>
    </section>

    <footer class="task">
      <div class="tb start">
        <svg viewBox="0 0 16 16" class="i16"><path d="M1 3q3-2 6 0L6 8Q3 6 0 8z" fill="#e8552a" /><path d="M8 3q3 2 6 0l-1 5q-3 2-6 0z" fill="#7cb82f" /><path d="M0 9q3-2 6 0l-1 5Q2 12-1 14z" fill="#3c8fd6" /><path d="M7 9q3 2 6 0l-1 5q-3 2-6 0z" fill="#f6c12c" /></svg>
        <b v-fit="29">Start</b>
      </div>
      <i class="sep s1"></i>
      <div class="tb t1"><svg viewBox="0 0 16 16" class="i16"><path d="M0 9l5-3 2 2-3 4z" fill="#3a7cc0" /><path d="M5 6l4-6 3 6 4 8-4-2-4 4-4-5z" fill="#c8401c" /><path d="M9 0l1 8-3 7-3-3z" fill="#7a2410" /></svg><span v-fit="124">MATLAB&nbsp; 7.11.0 (R2010b)</span></div>
      <div class="tb t2"><svg viewBox="0 0 16 16" class="i16"><path d="M2 1h10l2 2v12H2z" fill="#fff" stroke="#7d93ad" /><path d="M4 5h6M4 7.500h6M4 10h4" stroke="#8fb3dc" /><path d="M13 2l2 2-6 7-2 1 0-3z" fill="#e08a2c" /></svg><span v-fit="132">Editor - C:\Users\mvdmla...</span></div>
      <div class="tb t3"><svg class="i16"><use href="#n" /></svg><b v-fit="128">Neuralynx Cheetah D...</b></div>
      <svg viewBox="0 0 14 16" class="calc"><path d="M1 0h12v16H1z" fill="#6fa5d8" /><path d="M3 2h8v3H3z" fill="#eef6ff" /><path d="M3 7h2v2H3zM6 7h2v2H6zM9 7h2v2H9zM3 10h2v2H3zM6 10h2v2H6zM9 10h2v2H9zM3 13h2v1H3zM6 13h2v1H6zM9 13h2v1H9z" fill="#fff" /></svg>
      <svg viewBox="0 0 16 16" class="paint"><ellipse cx="7" cy="9.500" rx="6.500" ry="5.500" fill="#d5e2ee" stroke="#8aa2b8" /><circle cx="4" cy="8" r="1.500" fill="#d83c2c" /><circle cx="8" cy="7" r="1.500" fill="#3e9c3c" /><circle cx="5" cy="12" r="1.500" fill="#2f6fd0" /><path d="M13 0h2l-1 11h-2z" fill="#c8692c" /></svg>
      <div class="tb t4"><svg class="i16"><use href="#fold" /></svg><span v-fit="57">2013-07-25</span></div>
      <svg viewBox="0 0 16 16" class="chrome"><circle cx="8" cy="8" r="7.500" fill="#e33b2e" /><path d="M1.500 4.300A7.500 7.500 0 0 0 7 15.400L10 9.500 5 9.500z" fill="#3aa757" /><path d="M7 15.400A7.500 7.500 0 0 0 14.900 5H8l3 4z" fill="#fcc934" /><circle cx="8" cy="8" r="3.500" fill="#fff" /><circle cx="8" cy="8" r="2.700" fill="#4285f4" /></svg>
      <div class="tb t5"><svg viewBox="0 0 16 16" class="i16"><path d="M4 0h12v16H4z" fill="#fff" stroke="#2a5699" /><path d="M0 2h12v12H0z" fill="#2a5caa" /><text x="1" y="12" font-family="Liberation Sans" font-weight="bold" font-size="10" fill="#fff">W</text></svg><span v-fit="132">Procedures for RR1 T.do...</span></div>
      <i class="sp"></i>
      <i class="sep s2"></i>
      <span class="data" v-fit="22">data</span>
      <svg class="i16 fo"><use href="#fold" /></svg>
      <span class="jb" v-fit="74">Julien_Behavior</span>
      <svg viewBox="0 0 9 7" class="more"><path d="M1 0l3 3-3 3M5 0l3 3-3 3" fill="none" stroke="#000" stroke-width="1.400" /></svg>
      <div class="tray">
        <svg viewBox="0 0 6 9" class="up"><path d="M.5 4l2.500-3 2.500 3M.5 8l2.500-3 2.500 3" fill="none" stroke="#000" stroke-width="1.300" /></svg>
        <i class="sq"></i>
        <svg viewBox="0 0 16 16"><path d="M4 1l4 3-4 3-4-3zM12 1l4 3-4 3-4-3zM4 7l4 3-4 3-4-3zM12 7l4 3-4 3-4-3zM8 4l4 3-4 3-4-3z" fill="#4a9fe0" /><circle cx="11.500" cy="11.500" r="4.500" fill="#d42a2a" /><path d="M9.500 9.500l4 4M13.500 9.500l-4 4" stroke="#fff" stroke-width="1.500" /></svg>
        <svg viewBox="0 0 16 16"><path d="M1.500 0v16" stroke="#666" stroke-width="1.600" /><path d="M2.500 1.500h6v2h7l-3 3 1 3H8v-1H2.500z" fill="#fff" stroke="#777" /></svg>
        <svg viewBox="0 0 16 16"><path d="M4.500 3.500h11v8h-11z" fill="#b8b8b8" stroke="#555" /><path d="M7 14.500h7M10 12v2" stroke="#555" /><path d="M.5 1.500h5v4h-2v9h4" fill="#fff" stroke="#666" /></svg>
        <svg viewBox="0 0 16 16"><path d="M.5 5.500h3l4-4v13l-4-4h-3z" fill="#fff" stroke="#777" /><path d="M9.500 5q1.500 3 0 6M11.500 3.500q2.500 4.500 0 9M13.500 2q3.500 6 0 12" fill="none" stroke="#888" /></svg>
        <span v-fit="40">9:18 AM</span>
        <svg viewBox="0 0 15 13" class="dsk"><path d="M0 0h15v13H0z" fill="#1d62b8" /><path d="M0 0h15L0 8z" fill="#4a90dc" /><path d="M0 10h15v3H0z" fill="#16355e" /><circle cx="2.500" cy="9.500" r="2" fill="#8fd0f0" /></svg>
      </div>
    </footer>
  </div>
</template>

<style>
html, body { margin: 0; background: #fff; }
</style>

<style scoped>
.screen { width: 1680px; height: 1050px; display: flex; flex-direction: column; overflow: hidden; font: 11px/13px Tahoma, "DejaVu Sans Condensed", "DejaVu Sans", sans-serif; color: #000; }
.defs { position: absolute; }
span, b, em { white-space: pre; flex: none; font-style: normal; display: inline-block; }
svg { display: block; flex: none; }
.sp { flex: 1; }
.desk { position: relative; height: 1022px; background: #808080; overflow: hidden; }
.title { height: 18px; display: flex; align-items: center; padding: 0 2px; flex: none; }
.title.off { background: linear-gradient(90deg, #808080, #c0c0c0); color: #d4d0c8; }
.title.on { background: linear-gradient(90deg, #0a246a, #a6caf0); color: #fff; }
.nl { width: 16px; height: 16px; margin-right: 2px; }
.btn { width: 12px; height: 10px; box-sizing: content-box; border: 2px solid; border-color: #fff #404040 #404040 #fff; background: #d4d0c8; shape-rendering: crispEdges; }
.last { margin-left: 2px; }
.menu { height: 20px; background: #d4d0c8; display: flex; align-items: center; gap: 12px; padding-left: 5px; flex: none; }
.dim { color: #808080; gap: 12.7px; }
.win { position: absolute; box-sizing: border-box; background: #d4d0c8; border: 1px solid; border-color: #d4d0c8 #404040 #404040 #d4d0c8; box-shadow: inset 1px 1px #fff, inset -1px -1px #808080; padding: 3px; display: flex; flex-direction: column; }
.client { flex: 1; min-height: 0; border: 2px solid; border-color: #606060 #fff #fff #606060; background: #000; overflow: hidden; }
.dark { background: #030303; }
.wc { left: 560px; top: 42px; width: 1087px; height: 979px; }
.w1 { left: 507px; top: -1px; width: 791px; height: 1051px; }
.w2 { left: 512px; top: 78px; width: 1167px; height: 913px; }
.dlg { left: 22px; top: 531px; width: 725px; height: 439px; padding: 2px; }
.vid { left: 198px; top: 198px; width: 1100px; height: 700px; }
.spike { left: 68px; top: 77px; width: 1100px; height: 700px; }
.plot { width: 100%; height: 100%; shape-rendering: crispEdges; fill: none; stroke-width: 1; }
.plot polyline { stroke-width: 1.35; }
.plot text, .cb text { font: 10px "Liberation Sans", sans-serif; stroke: none; }
.grid { stroke: #505050; }
path.sel { fill: #633163; }
.cells { display: grid; grid-template-columns: repeat(4, 271px); grid-auto-rows: 162px; width: 1085px; height: 649px; border-bottom: 1px solid #fff; background: linear-gradient(#fff, #fff) 1084px 0 / 1px 100% no-repeat; }
.ch { box-sizing: border-box; height: 15px; border: solid #fff; border-width: 1px 0 0 1px; display: flex; align-items: center; padding: 0 3px 0 1px; color: #fff; font: 10px/12px "Liberation Sans", sans-serif; }
.ch.sel { background: #633163; }
.k1 { width: 9px; height: 9px; margin-right: 6px; }
.k2 { width: 8px; height: 9px; margin-right: 6px; }
.k3 { width: 6px; height: 9px; margin-right: 7px; }
.k4 { width: 9px; height: 9px; }
.cb { width: 271px; height: 147px; shape-rendering: crispEdges; fill: none; }

.dlg .title { padding-left: 2px; }
.dbody { display: flex; flex-direction: column; padding: 4px 7px 0 4px; }
.tool { margin: 0 0 0 1px; height: 31px; border: 1px solid; border-color: #606060 #fff #fff #606060; display: flex; align-items: center; color: #9a9a96; gap: 5px; padding-left: 8px; }
.ball { width: 21px; height: 21px; border-radius: 50%; background: radial-gradient(circle at 50% 70%, #b9dcb0 0 25%, #7db878 75%, #5f9a5f); }
.group { position: relative; border: 1px solid #808080; box-shadow: 1px 1px #fff, inset 1px 1px #fff; display: flex; flex-direction: column; }
.leg { position: absolute; left: 6px; top: -6px; background: #d4d0c8; padding: 0 2px; }
.g1 { margin: 13px 0 0 1px; height: 147px; padding-left: 10px; box-sizing: border-box; }
.g2 { margin: 10px 0 0 0; height: 205px; box-sizing: border-box; padding-left: 7px; }
.st { height: 13px; }
.a { margin-top: 32px; } .b { margin-top: 6px; } .c { margin-top: 12px; } .d { margin-top: 10px; } .e { margin-top: 10px; }
.filters { display: flex; align-items: center; margin-top: 12px; height: 14px; padding-left: 3px; }
.chk { width: 10px; height: 10px; border: 1px solid; border-color: #606060 #fff #fff #606060; background: #fff; margin-right: 5px; }
.c1 { margin-left: 6px; } .c2 { margin-left: 12px; }
.list { margin-top: 9px; width: 690px; height: 157px; border: 2px solid; border-color: #606060 #fff #fff #606060; background: #fff; display: flex; flex-direction: column; }
.lh { display: flex; height: 16px; background: #d4d0c8; border-bottom: 1px solid #404040; box-shadow: inset 1px 1px #fff; }
.lh .h1 { width: 99px; box-sizing: border-box; border-right: 1px solid #404040; padding: 2px 0 0 5px; }
.lh .h2 { padding: 2px 0 0 5px; }
.lr { display: flex; padding-top: 3px; height: 13px; }
.lr .h1 { width: 97px; padding-left: 8px; box-sizing: border-box; }
.lr .h2 { padding-left: 8px; }
.lfill { flex: 1; }
.bar { display: flex; height: 15px; }
.sb, .thumb { box-sizing: border-box; width: 15px; height: 15px; background: #d4d0c8; border: 1px solid; border-color: #fff #404040 #404040 #fff; }
.thumb { width: 443px; }
.track { flex: 1; background: repeating-conic-gradient(#d4d0c8 0 25%, #fff 0 50%) 0 0 / 2px 2px; }

.task { height: 28px; box-sizing: border-box; background: #d4d0c8; border-top: 1px solid #d4d0c8; box-shadow: inset 0 1px #fff; display: flex; align-items: center; padding: 2px 2px 0; position: relative; }
.tb { box-sizing: border-box; height: 22px; display: flex; align-items: center; padding-left: 4px; border: 1px solid; border-color: #fff #404040 #404040 #fff; box-shadow: inset -1px -1px #808080; flex: none; }
.i16 { width: 16px; height: 16px; margin-right: 4px; }
.start { width: 52px; padding-left: 1px; }
.start .i16 { margin-right: 1px; }
.sep { width: 1px; height: 18px; border: solid; border-width: 0 1px 0 0; border-color: #808080; box-shadow: -1px 0 #fff; }
.s1 { margin: 0 8px 0 7px; }
.t1 { width: 159px; padding-left: 3px; } .t2 { width: 160px; margin-left: 1px; padding-left: 3px; }
.t2 .i16 { margin-right: 3px; }
.t3 { width: 160px; margin-left: 2px; background: #fff; border-color: #404040 #fff #fff #404040; box-shadow: inset 1px 1px #808080; padding-left: 3px; }
.calc { width: 14px; height: 16px; margin-left: 11px; }
.paint { width: 16px; height: 16px; margin-left: 18px; }
.t4 { width: 160px; margin-left: 11px; padding-left: 2px; }
.chrome { width: 16px; height: 16px; margin-left: 10px; }
.t5 { width: 161px; margin-left: 10px; padding-left: 3px; }
.s2 { margin-right: 4px; }
.data { margin-right: 7px; }
.fo { margin-right: 4px; }
.jb { margin-right: 12px; }
.more { width: 9px; height: 7px; margin: 0 4px 6px 0; }
.tray { box-sizing: border-box; width: 220px; height: 22px; border: 1px solid; border-color: #808080 #fff #fff #808080; display: flex; align-items: center; padding-left: 5px; }
.tray svg { width: 16px; height: 16px; margin-right: 8px; }
.tray .up { width: 6px; height: 9px; margin: 0 11px 2px 0; }
.sq { width: 14px; height: 14px; border: 1px solid #808080; margin-right: 8px; }
.tray span { margin: 0 12px 0 8px; }
.tray .dsk { width: 15px; height: 13px; margin: 0; }
</style>
